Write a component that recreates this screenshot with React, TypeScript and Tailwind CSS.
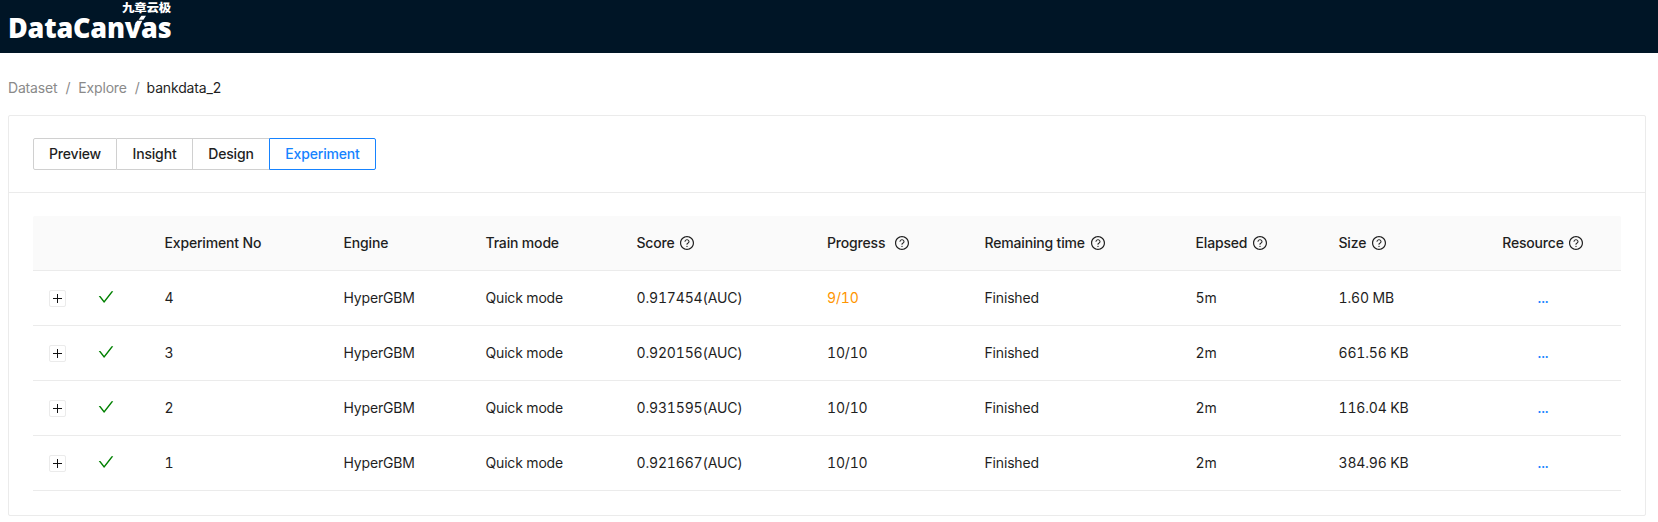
import { AiOutlineCheck, AiOutlineQuestionCircle } from "react-icons/ai";

const columns = [
  { title: "Experiment No" },
  { title: "Engine" },
  { title: "Train mode" },
  { title: "Score", help: "ml-1" },
  { title: "Progress", help: "ml-[9px]" },
  { title: "Remaining time", help: "ml-[5px]" },
  { title: "Elapsed", help: "ml-[5px]" },
  { title: "Size", help: "ml-[5px]" },
];

const rows = [
  { no: "4", score: "0.917454(AUC)", progress: "9/10", elapsed: "5m", size: "1.60 MB", partial: true },
  { no: "3", score: "0.920156(AUC)", progress: "10/10", elapsed: "2m", size: "661.56 KB", partial: false },
  { no: "2", score: "0.931595(AUC)", progress: "10/10", elapsed: "2m", size: "116.04 KB", partial: false },
  { no: "1", score: "0.921667(AUC)", progress: "10/10", elapsed: "2m", size: "384.96 KB", partial: false },
];

const grid =
  "grid grid-cols-[50px_65.5px_179px_142px_151px_190.5px_157.5px_211px_143px_142.5px_1fr] items-center h-[55px] border-b border-[#ebebeb]";

function Logo() {
  return (
    <svg width="180" height="53" viewBox="0 0 180 53" fill="white" aria-label="DataCanvas">
      <text x="122" y="12" textLength="49" lengthAdjust="spacingAndGlyphs" className="font-['Noto_Sans_CJK_SC',sans-serif] text-[11px] font-black">
        九章云极
      </text>
      <text x="8" y="37.8" textLength="163.5" lengthAdjust="spacingAndGlyphs" className="font-['Open_Sans',sans-serif] text-[28px] font-extrabold">
        DataCanvas
      </text>
      <path d="M134.5 25.8l2.5-5h5.4l-3 5zM138.6 19.8l2.8-4h4.6l-2.6 4z" />
    </svg>
  );
}

function ExpandButton() {
  return (
    <button className="flex h-[17px] w-[17px] items-center justify-center rounded-[2px] border border-[#ebebeb] bg-white">
      <svg width="9" height="9" viewBox="0 0 9 9" stroke="#111" strokeWidth="1">
        <path d="M0 4.5h9M4.5 0v9" />
      </svg>
    </button>
  );
}

function Tab({ label, className }: { label: string; className: string }) {
  return (
    <button className={`flex h-8 items-center justify-center border font-medium ${className}`}>{label}</button>
  );
}

export default function App() {
  return (
    <div className="h-[522px] w-[1658px] overflow-hidden bg-white font-['Inter',sans-serif] text-[14px] leading-[22px] tracking-[-0.17px] text-[#1f1f1f] tabular-nums">
      <header className="h-[53px] bg-[#001526]">
        <Logo />
      </header>

      <nav className="flex h-[62px] items-center pt-2 pl-2 text-[#8a8a8a]">
        <span>Dataset</span>
        <span className="mx-2">/</span>
        <span>Explore</span>
        <span className="mr-[7px] ml-2">/</span>
        <span className="text-[#1f1f1f]">bankdata_2</span>
      </nav>

      <main className="ml-2 h-[401px] w-[1638px] rounded-[2px] border border-[#ebebeb]">
        <div className="flex h-[77px] border-b border-[#ebebeb] pt-[22px] pl-6">
          <Tab label="Preview" className="w-[84px] rounded-l-[2px] border-[#d0d0d0]" />
          <Tab label="Insight" className="w-[76px] border-l-0 border-[#d0d0d0]" />
          <Tab label="Design" className="w-[76px] border-x-0 border-[#d0d0d0]" />
          <Tab label="Experiment" className="w-[107px] rounded-r-[2px] border-[#1683ff] text-[#1683ff]" />
        </div>

        <div className="mx-6 mt-[23px]">
          <div className={`${grid} rounded-t-[2px] bg-[#fafafa] font-medium`}>
            <span />
            <span />
            {columns.map((c) => (
              <span key={c.title} className="flex items-center pl-4 whitespace-nowrap">
                {c.title}
                {c.help && <AiOutlineQuestionCircle size={16} className={c.help} />}
              </span>
            ))}
            <span className="flex items-center justify-center whitespace-nowrap">
              Resource
              <AiOutlineQuestionCircle size={16} className="ml-1" />
            </span>
          </div>

          {rows.map((r) => (
            <div key={r.no} className={grid}>
              <span className="pt-px pl-4">
                <ExpandButton />
              </span>
              <span className="pb-0.5 pl-3.5">
                <AiOutlineCheck size={18} color="#008000" />
              </span>
              <span className="pl-4">{r.no}</span>
              <span className="pl-4">HyperGBM</span>
              <span className="pl-4">Quick mode</span>
              <span className="pl-4">{r.score}</span>
              <span className={r.partial ? "pl-4 text-[#ff9500]" : "pl-4"}>{r.progress}</span>
              <span className="pl-4">Finished</span>
              <span className="pl-4">{r.elapsed}</span>
              <span className="pl-4">{r.size}</span>
              <span className="text-center font-medium text-[#1683ff]">...</span>
            </div>
          ))}
        </div>
      </main>
    </div>
  );
}
